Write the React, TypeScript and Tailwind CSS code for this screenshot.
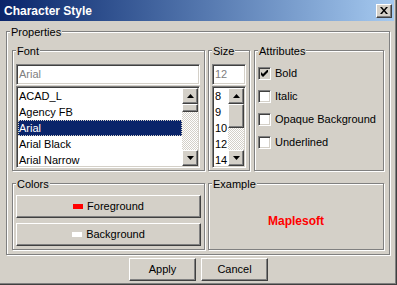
import React from "react";

const raised =
  "border border-t-white border-l-white border-r-[#404040] border-b-[#404040] shadow-[inset_-1px_-1px_0_#808080,inset_1px_1px_0_#d4d0c8]";
const sunken =
  "border border-t-[#808080] border-l-[#808080] border-r-white border-b-white shadow-[inset_1px_1px_0_#404040,inset_-1px_-1px_0_#d4d0c8]";
const checker =
  "bg-[image:repeating-conic-gradient(#ffffff_0_25%,#d4d0c8_0_50%)] bg-[length:2px_2px]";

const Group = ({
  label,
  className,
  children,
}: {
  label: string;
  className: string;
  children?: React.ReactNode;
}) => (
  <div
    className={`relative border border-[#808080] shadow-[1px_1px_0_#fff,inset_1px_1px_0_#fff] ${className}`}
  >
    <span className="absolute left-[3px] -top-[6px] bg-[#d4d0c8] px-[1px] leading-[13px]">
      {label}
    </span>
    {children}
  </div>
);

const Arrow = ({ up }: { up?: boolean }) => (
  <div className={`w-[16px] h-[16px] bg-[#d4d0c8] flex items-center justify-center ${raised}`}>
    <svg width="7" height="4" viewBox="0 0 7 4">
      <path d={up ? "M3.5 0 L7 4 L0 4 Z" : "M0 0 L7 0 L3.5 4 Z"} fill="#000" />
    </svg>
  </div>
);

const ScrollBar = ({ thumb }: { thumb: number }) => (
  <div className={`w-[16px] h-full flex flex-col ${checker}`}>
    <Arrow up />
    <div className={`w-[16px] bg-[#d4d0c8] ${raised}`} style={{ height: thumb }} />
    <div className="flex-1" />
    <Arrow />
  </div>
);

const ListBox = ({
  items,
  selected,
  thumb,
  className,
}: {
  items: string[];
  selected?: number;
  thumb: number;
  className: string;
}) => (
  <div className={`flex bg-white ${sunken} p-[1px] ${className}`}>
    <div className="flex-1 overflow-hidden">
      {items.map((it, i) => (
        <div
          key={it}
          className={`h-[16px] leading-[16px] pl-[1px] whitespace-nowrap ${
            i === selected
              ? "bg-[#0a246a] text-white outline-1 outline-dotted outline-[#d4d0c8] -outline-offset-1"
              : ""
          }`}
        >
          {it}
        </div>
      ))}
    </div>
    <ScrollBar thumb={thumb} />
  </div>
);

const Check = ({ label, checked }: { label: string; checked?: boolean }) => (
  <div className="flex items-center h-[13px]">
    <div
      className={`w-[13px] h-[13px] ${sunken} ${
        checked ? "bg-[#d4d0c8]" : "bg-white"
      } flex items-center justify-center`}
    >
      {checked && (
        <svg width="7" height="7" viewBox="0 0 7 7">
          <path d="M0 2 L2 4 L6 0 L7 0 L7 2 L2 7 L0 5 Z" fill="#000" />
        </svg>
      )}
    </div>
    <span className="ml-[4px]">{label}</span>
  </div>
);

export default function App() {
  return (
    <div className="w-[397px] h-[285px] bg-[#d4d0c8] shadow-[inset_-1px_-1px_0_#404040,inset_-2px_-2px_0_#808080] font-['Liberation_Sans',Arial,sans-serif] text-[11px] text-black flex flex-col">
      {/* Title bar */}
      <div className="h-[21px] w-[394px] flex items-center justify-between bg-linear-to-r from-[#0a246a] to-[#a6caf0] pl-[4px] pr-[2px]">
        <span className="text-white font-bold text-[12px]">Character Style</span>
        <div className={`w-[16px] h-[14px] bg-[#d4d0c8] flex items-center justify-center ${raised}`}>
          <svg width="8" height="7" viewBox="0 0 8 7">
            <path
              d="M0 0h2l2 2.5L6 0h2L5 3.5 8 7H6L4 4.5 2 7H0l3-3.5z"
              fill="#000"
            />
          </svg>
        </div>
      </div>

      {/* Properties */}
      <Group label="Properties" className="ml-[6px] mt-[10px] w-[384px] h-[224px] pl-[5px] pt-[18px]">
        <div className="flex">
          <Group label="Font" className="w-[193px] h-[121px] pl-[3px] pt-[13px]">
            <div className={`w-[184px] h-[21px] bg-white ${sunken} pl-[2px] leading-[19px] text-[#808080]`}>
              Arial
            </div>
            <ListBox
              className="w-[184px] h-[82px] mt-[1px]"
              items={["ACAD_L", "Agency FB", "Arial", "Arial Black", "Arial Narrow"]}
              selected={2}
              thumb={8}
            />
          </Group>
          <Group label="Size" className="ml-[3px] w-[42px] h-[121px] pl-[3px] pt-[13px]">
            <div className={`w-[34px] h-[21px] bg-white ${sunken} pl-[2px] leading-[19px] text-[#808080]`}>
              12
            </div>
            <ListBox
              className="w-[34px] h-[82px] mt-[1px]"
              items={["8", "9", "10", "12", "14"]}
              thumb={24}
            />
          </Group>
          <Group label="Attributes" className="ml-[4px] w-[130px] h-[121px] pl-[3px] pt-[16px] flex flex-col gap-[10px]">
            <Check label="Bold" checked />
            <Check label="Italic" />
            <Check label="Opaque Background" />
            <Check label="Underlined" />
          </Group>
        </div>
        <div className="flex mt-[12px]">
          <Group label="Colors" className="w-[193px] h-[67px] pl-[3px] pt-[11px] flex flex-col gap-[5px]">
            <div className={`w-[185px] h-[23px] flex items-center justify-center ${raised}`}>
              <span className="w-[10px] h-[5px] bg-[#ff0000] mr-[4px]" />
              Foreground
            </div>
            <div className={`w-[185px] h-[23px] flex items-center justify-center ${raised}`}>
              <span className="w-[10px] h-[5px] bg-white mr-[4px]" />
              Background
            </div>
          </Group>
          <Group label="Example" className="ml-[3px] w-[176px] h-[67px] flex items-center justify-center pt-[9px]">
            <span className="text-[#ff0000] font-bold text-[12px]">Maplesoft</span>
          </Group>
        </div>
      </Group>

      {/* Buttons */}
      <div className="flex mt-[3px] pl-[129px] gap-[5px]">
        <div className={`w-[67px] h-[23px] flex items-center justify-center ${raised}`}>Apply</div>
        <div className={`w-[67px] h-[23px] flex items-center justify-center ${raised}`}>Cancel</div>
      </div>
    </div>
  );
}
